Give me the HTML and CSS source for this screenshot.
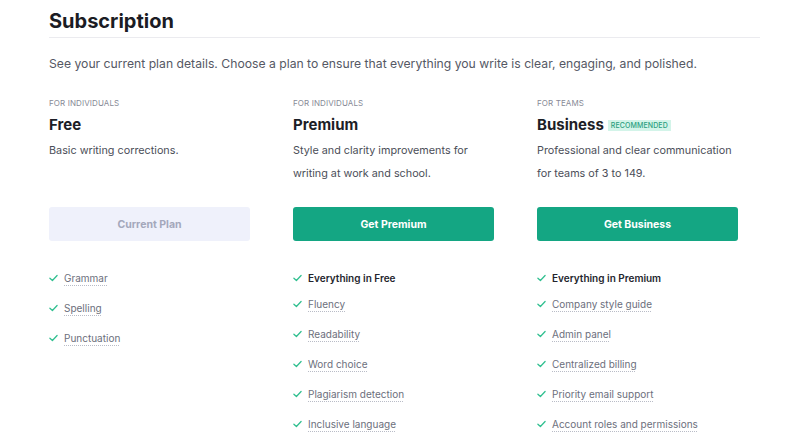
FILE: index.html
```html
<!DOCTYPE html>
<html>
<head>
<meta charset="utf-8">
<link rel="stylesheet" href="styles.css">
</head>
<body>
<div class="page">
  <h1 class="title">Subscription</h1>
  <p class="intro">See your current plan details. Choose a plan to ensure that everything you write is clear, engaging, and polished.</p>
  <div class="plans">
    <div class="plan">
      <div class="label">For individuals</div>
      <div class="name">Free</div>
      <div class="desc">Basic writing corrections.</div>
      <button class="btn btn-current">Current Plan</button>
      <ul class="features">
        <li><svg class="check" viewBox="0 0 10 8"><path d="M1 4.2 L3.8 6.8 L9 1.2"/></svg><span class="feat">Grammar</span></li>
        <li><svg class="check" viewBox="0 0 10 8"><path d="M1 4.2 L3.8 6.8 L9 1.2"/></svg><span class="feat">Spelling</span></li>
        <li><svg class="check" viewBox="0 0 10 8"><path d="M1 4.2 L3.8 6.8 L9 1.2"/></svg><span class="feat">Punctuation</span></li>
      </ul>
    </div>
    <div class="plan">
      <div class="label">For individuals</div>
      <div class="name">Premium</div>
      <div class="desc">Style and clarity improvements for<br>writing at work and school.</div>
      <button class="btn btn-green">Get Premium</button>
      <ul class="features">
        <li class="lead"><svg class="check" viewBox="0 0 10 8"><path d="M1 4.2 L3.8 6.8 L9 1.2"/></svg><span>Everything in Free</span></li>
        <li><svg class="check" viewBox="0 0 10 8"><path d="M1 4.2 L3.8 6.8 L9 1.2"/></svg><span class="feat">Fluency</span></li>
        <li><svg class="check" viewBox="0 0 10 8"><path d="M1 4.2 L3.8 6.8 L9 1.2"/></svg><span class="feat">Readability</span></li>
        <li><svg class="check" viewBox="0 0 10 8"><path d="M1 4.2 L3.8 6.8 L9 1.2"/></svg><span class="feat">Word choice</span></li>
        <li><svg class="check" viewBox="0 0 10 8"><path d="M1 4.2 L3.8 6.8 L9 1.2"/></svg><span class="feat">Plagiarism detection</span></li>
        <li><svg class="check" viewBox="0 0 10 8"><path d="M1 4.2 L3.8 6.8 L9 1.2"/></svg><span class="feat">Inclusive language</span></li>
      </ul>
    </div>
    <div class="plan">
      <div class="label">For teams</div>
      <div class="name">Business <span class="badge">Recommended</span></div>
      <div class="desc">Professional and clear communication<br>for teams of 3 to 149.</div>
      <button class="btn btn-green">Get Business</button>
      <ul class="features">
        <li class="lead"><svg class="check" viewBox="0 0 10 8"><path d="M1 4.2 L3.8 6.8 L9 1.2"/></svg><span>Everything in Premium</span></li>
        <li><svg class="check" viewBox="0 0 10 8"><path d="M1 4.2 L3.8 6.8 L9 1.2"/></svg><span class="feat">Company style guide</span></li>
        <li><svg class="check" viewBox="0 0 10 8"><path d="M1 4.2 L3.8 6.8 L9 1.2"/></svg><span class="feat">Admin panel</span></li>
        <li><svg class="check" viewBox="0 0 10 8"><path d="M1 4.2 L3.8 6.8 L9 1.2"/></svg><span class="feat">Centralized billing</span></li>
        <li><svg class="check" viewBox="0 0 10 8"><path d="M1 4.2 L3.8 6.8 L9 1.2"/></svg><span class="feat">Priority email support</span></li>
        <li><svg class="check" viewBox="0 0 10 8"><path d="M1 4.2 L3.8 6.8 L9 1.2"/></svg><span class="feat">Account roles and permissions</span></li>
      </ul>
    </div>
  </div>
</div>
</body>
</html>
```

FILE: styles.css
```css
* { box-sizing: border-box; }
html, body { margin: 0; padding: 0; background: #ffffff; }
body {
  font-family: Inter, "Liberation Sans", Arial, sans-serif;
  color: #1f2029;
  overflow: hidden;
}
.page {
  margin-left: 49px;
  width: 711px;
}
.title {
  margin: 0;
  padding-top: 9px;
  padding-bottom: 4px;
  font-size: 20px;
  line-height: 24px;
  font-weight: 700;
  color: #1b1c24;
  border-bottom: 1px solid #ebebef;
}
.intro {
  margin: 16px 0 0 0;
  font-size: 12.2px;
  line-height: 20px;
  color: #555864;
}
.plans {
  display: grid;
  grid-template-columns: 244px 244px 223px;
  margin-top: 23px;
}
.plan {
  display: flex;
  flex-direction: column;
}
.label {
  font-size: 8px;
  line-height: 12px;
  text-transform: uppercase;
  color: #878a96;
  letter-spacing: 0.1px;
}
.name {
  margin-top: 6px;
  font-size: 15px;
  line-height: 20px;
  font-weight: 700;
  color: #1d1e26;
  display: flex;
  align-items: center;
}
.badge {
  margin-left: 4px;
  font-size: 7px;
  line-height: 11px;
  padding: 0 3px;
  font-weight: 500;
  text-transform: uppercase;
  background: #d3f4e9;
  color: #2b9f80;
  letter-spacing: 0.1px;
}
.desc {
  margin-top: 4px;
  font-size: 10.8px;
  line-height: 23px;
  height: 46px;
  color: #4b4e58;
}
.btn {
  margin-top: 22px;
  width: 201px;
  height: 34px;
  border: none;
  border-radius: 3px;
  font-family: Inter, "Liberation Sans", Arial, sans-serif;
  font-size: 10.5px;
  font-weight: 700;
  cursor: pointer;
}
.btn-current {
  background: #eff1fb;
  color: #a4a8bb;
}
.btn-green {
  background: #14a683;
  color: #ffffff;
}
.features {
  list-style: none;
  margin: 22px 0 0 0;
  padding: 0;
}
.features li {
  display: flex;
  align-items: center;
  height: 30px;
  font-size: 10px;
  color: #6c6f7c;
}
.features li.lead {
  height: 23px;
  margin-top: 3px;
  font-weight: 600;
  color: #24252d;
}
.check {
  width: 9px;
  height: 8px;
  margin-right: 6px;
  flex: none;
}
.check path {
  fill: none;
  stroke: #2fbf8f;
  stroke-width: 1.4;
  stroke-linecap: round;
  stroke-linejoin: round;
}
.feat {
  text-decoration: underline dotted #b9bcc7;
  text-underline-offset: 3px;
  text-decoration-thickness: 1px;
}
```
